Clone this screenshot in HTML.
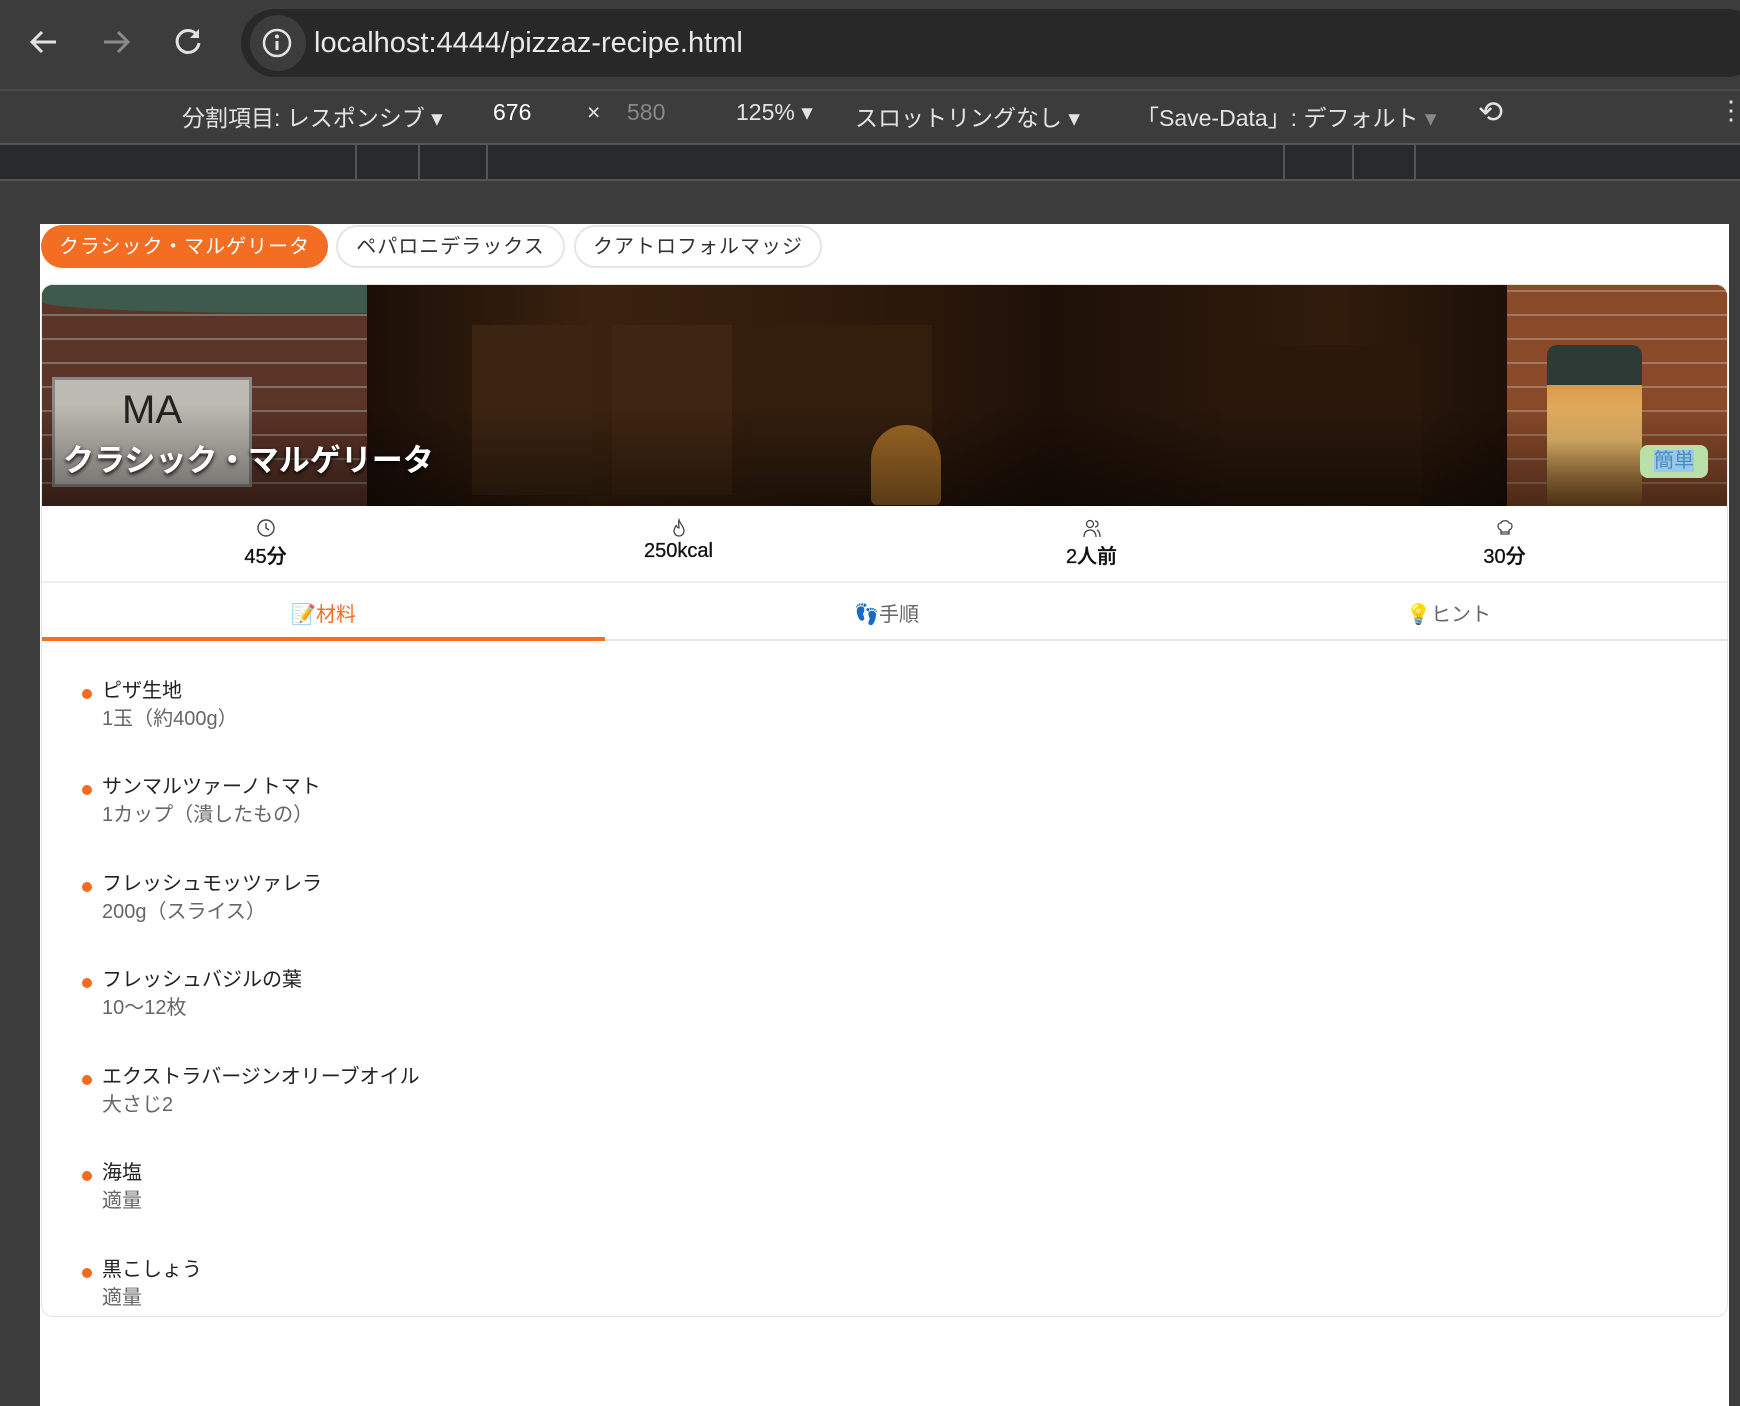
<!DOCTYPE html>
<html><head><meta charset="utf-8">
<style>
*{box-sizing:border-box;margin:0;padding:0}
body{width:1740px;height:1406px;overflow:hidden;background:#3c3c3c;font-family:"Liberation Sans","Noto Sans CJK JP",sans-serif;position:relative}
.abs{position:absolute}
.top{left:0;top:0;width:1740px;height:89px;background:#3c3c3c}
.pill{left:241px;top:9px;width:1520px;height:68px;background:#282828;border-radius:34px}
.url{left:314px;top:27px;color:#e8e8e8;font-size:29px}
.tb2{left:0;top:89px;width:1740px;height:54px;background:#3c3c3c;border-top:2px solid #4a4a4a;color:#e3e3e3;font-size:23px}
.tb2 span{position:absolute;top:8px;white-space:nowrap}
.ruler{left:0;top:143px;width:1740px;height:38px;background:#292a2d;border-top:2px solid #555;border-bottom:2px solid #555}
.tick{top:0;width:2px;height:36px;background:#555}
.page{left:40px;top:224px;width:1689px;height:1182px;background:#fff}
.chip{top:225px;height:43px;border-radius:22px;font-size:20px;line-height:45px;text-align:center;letter-spacing:1px}
.card{left:41px;top:284px;width:1687px;height:1033px;border:1px solid #e2e2e2;border-radius:12px;overflow:hidden;background:#fff}
.stat{top:221px;width:413px;height:76px;text-align:center;font-size:20px;color:#111;font-weight:500;-webkit-text-stroke:0.3px #111}
.stat svg{display:block;margin:12px auto 2px}
.ing{left:40px;font-size:20px;color:#222}
.ing .d{position:absolute;left:0;top:12px;width:10px;height:10px;border-radius:50%;background:#f26b21}
.ing .n{margin-left:20px;line-height:28px}
.ing .a{margin-left:20px;color:#666;line-height:28px}
</style></head><body>
<div class="abs top"></div>
<svg class="abs" style="left:28px;top:28px" width="32" height="28" viewBox="0 0 32 28"><path d="M28 14H5M14 4L4 14l10 10" stroke="#e3e3e3" stroke-width="3" fill="none"/></svg>
<svg class="abs" style="left:100px;top:28px" width="32" height="28" viewBox="0 0 32 28"><path d="M4 14h23M18 4l10 10-10 10" stroke="#8a8a8a" stroke-width="3" fill="none"/></svg>
<svg class="abs" style="left:173px;top:26px" width="30" height="30" viewBox="0 0 30 30"><path d="M24 9A11 11 0 1 0 26 17" stroke="#e3e3e3" stroke-width="3" fill="none"/><path d="M26 3v9h-9z" fill="#e3e3e3"/></svg>
<div class="abs pill"></div>
<div class="abs" style="left:250px;top:15px;width:56px;height:56px;border-radius:50%;background:#3c3c3c"></div>
<svg class="abs" style="left:260px;top:26px" width="34" height="34" viewBox="0 0 34 34"><circle cx="17" cy="17" r="13" stroke="#e3e3e3" stroke-width="2.5" fill="none"/><path d="M17 15v9" stroke="#e3e3e3" stroke-width="3"/><circle cx="17" cy="10.5" r="2" fill="#e3e3e3"/></svg>
<div class="abs url">localhost:4444/pizzaz-recipe.html</div>
<div class="abs tb2">
<span style="left:182px">分割項目: レスポンシブ ▾</span>
<span style="left:493px;color:#fff">676</span>
<span style="left:587px">×</span>
<span style="left:627px;color:#888">580</span>
<span style="left:736px">125% ▾</span>
<span style="left:855px">スロットリングなし ▾</span>
<span style="left:1136px">「Save-Data」: デフォルト <span style="position:static;color:#888">▾</span></span>
<span style="left:1478px;font-size:30px;top:4px">⟲</span>
<span style="left:1718px;font-size:26px;top:4px">⋮</span>
</div>
<div class="abs ruler">
<div class="abs tick" style="left:355px"></div><div class="abs tick" style="left:418px"></div><div class="abs tick" style="left:486px"></div>
<div class="abs tick" style="left:1283px"></div><div class="abs tick" style="left:1352px"></div><div class="abs tick" style="left:1414px"></div>
</div>
<div class="abs page"></div>
<div class="abs chip" style="left:41px;width:287px;background:#f36d22;color:#fff">クラシック・マルゲリータ</div>
<div class="abs chip" style="left:336px;width:229px;border:2px solid #e5e5e5;color:#333;line-height:41px">ペパロニデラックス</div>
<div class="abs chip" style="left:574px;width:248px;border:2px solid #e5e5e5;color:#333;line-height:41px">クアトロフォルマッジ</div>

<div class="abs card">
 <div class="abs" style="left:0;top:0;width:1687px;height:221px;background:#241409;overflow:hidden">
  <div class="abs" style="left:0;top:0;width:325px;height:221px;background:repeating-linear-gradient(0deg,#5c3428 0 22px,#7a7068 22px 24px),#5c3428"></div>
  <div class="abs" style="left:0;top:0;width:620px;height:28px;background:#3d5a4c;border-radius:0 0 40% 40%"></div>
  <div class="abs" style="left:325px;top:0;width:1140px;height:221px;background:linear-gradient(90deg,#1c0f07,#3a220f 20%,#2a170a 50%,#1e1008 60%,#311c0c 85%,#1d1007)"></div>
  <div class="abs" style="left:430px;top:40px;width:120px;height:170px;background:#3b2411"></div>
  <div class="abs" style="left:570px;top:40px;width:120px;height:170px;background:#3f2612"></div>
  <div class="abs" style="left:710px;top:40px;width:180px;height:170px;background:#331e0e"></div>
  <div class="abs" style="left:1180px;top:60px;width:200px;height:160px;background:#2a180b"></div>
  <div class="abs" style="left:829px;top:140px;width:70px;height:80px;border-radius:35px 35px 6px 6px;background:#a06a25"></div>
  <div class="abs" style="left:1465px;top:0;width:222px;height:221px;background:repeating-linear-gradient(0deg,#8a4a2a 0 22px,#a07a60 22px 24px),#8a4a2a"></div>
  <div class="abs" style="left:1505px;top:60px;width:95px;height:160px;background:linear-gradient(#2d3a36 0 25%,#d79a4b 25%,#f0c070 60%,#8a5a25);border-radius:10px 10px 0 0"></div>
  <div class="abs" style="left:10px;top:92px;width:200px;height:110px;background:#bdbab2;border:3px solid #888;color:#222;font-size:40px;text-align:center;line-height:60px">MA</div>
  <div class="abs" style="left:0;top:120px;width:1687px;height:101px;background:linear-gradient(transparent,rgba(0,0,0,.45))"></div>
  <div class="abs" style="left:21px;top:150px;color:#fff;font-size:31px;font-weight:bold;text-shadow:0 2px 4px #000">クラシック・マルゲリータ</div>
  <div class="abs" style="left:1598px;top:160px;width:68px;height:33px;background:#b8e0a8;border-radius:8px;text-align:center;line-height:33px;font-size:20px;color:#4a8cc0"><span style="background:#9cc8e8">簡単</span></div>
 </div>
 <div class="abs stat" style="left:17px"><svg width="20" height="20" viewBox="0 0 20 20"><circle cx="10" cy="10" r="8" stroke="#444" stroke-width="1.4" fill="none"/><path d="M10 5v5l3 2" stroke="#444" stroke-width="1.4" fill="none"/></svg>45分</div>
 <div class="abs stat" style="left:430px"><svg width="20" height="20" viewBox="0 0 20 20"><path d="M10 2c1 4 5 6 5 11a5 5 0 0 1-10 0c0-3 2-4 2-6 1 2 2 3 3 3 0-3-1-5 0-8z" stroke="#444" stroke-width="1.3" fill="none"/></svg>250kcal</div>
 <div class="abs stat" style="left:843px"><svg width="20" height="20" viewBox="0 0 20 20"><circle cx="8" cy="6" r="3.5" stroke="#444" stroke-width="1.3" fill="none"/><path d="M2 19c0-5 3-7 6-7s6 2 6 7M13 3a3 3 0 0 1 0 6M15 12c2 1 3 3 3 7" stroke="#444" stroke-width="1.3" fill="none"/></svg>2人前</div>
 <div class="abs stat" style="left:1256px"><svg width="20" height="20" viewBox="0 0 20 20"><path d="M6 12c-4-1-4-7 0-7 1-3 7-3 8 0 4 0 4 6 0 7v4H6z" stroke="#444" stroke-width="1.3" fill="none"/><path d="M6 14h8" stroke="#444" stroke-width="1.3"/></svg>30分</div>
 <div class="abs" style="left:0;top:296px;width:1687px;height:2px;background:#eee"></div>
 <div class="abs" style="left:0;top:313px;width:563px;text-align:center;font-size:20px;color:#f36d22">📝材料</div>
 <div class="abs" style="left:563px;top:313px;width:563px;text-align:center;font-size:20px;color:#666">👣手順</div>
 <div class="abs" style="left:1126px;top:313px;width:561px;text-align:center;font-size:20px;color:#666">💡ヒント</div>
 <div class="abs" style="left:0;top:354px;width:1687px;height:2px;background:#e5e5e5"></div>
 <div class="abs" style="left:0;top:352px;width:563px;height:4px;background:#f36d22"></div>
 <div class="abs ing" style="top:392px"><div class="d"></div><div class="n">ピザ生地</div><div class="a">1玉（約400g）</div></div>
 <div class="abs ing" style="top:488px"><div class="d"></div><div class="n">サンマルツァーノトマト</div><div class="a">1カップ（潰したもの）</div></div>
 <div class="abs ing" style="top:585px"><div class="d"></div><div class="n">フレッシュモッツァレラ</div><div class="a">200g（スライス）</div></div>
 <div class="abs ing" style="top:681px"><div class="d"></div><div class="n">フレッシュバジルの葉</div><div class="a">10〜12枚</div></div>
 <div class="abs ing" style="top:778px"><div class="d"></div><div class="n">エクストラバージンオリーブオイル</div><div class="a">大さじ2</div></div>
 <div class="abs ing" style="top:874px"><div class="d"></div><div class="n">海塩</div><div class="a">適量</div></div>
 <div class="abs ing" style="top:971px"><div class="d"></div><div class="n">黒こしょう</div><div class="a">適量</div></div>
</div>
</body></html>
